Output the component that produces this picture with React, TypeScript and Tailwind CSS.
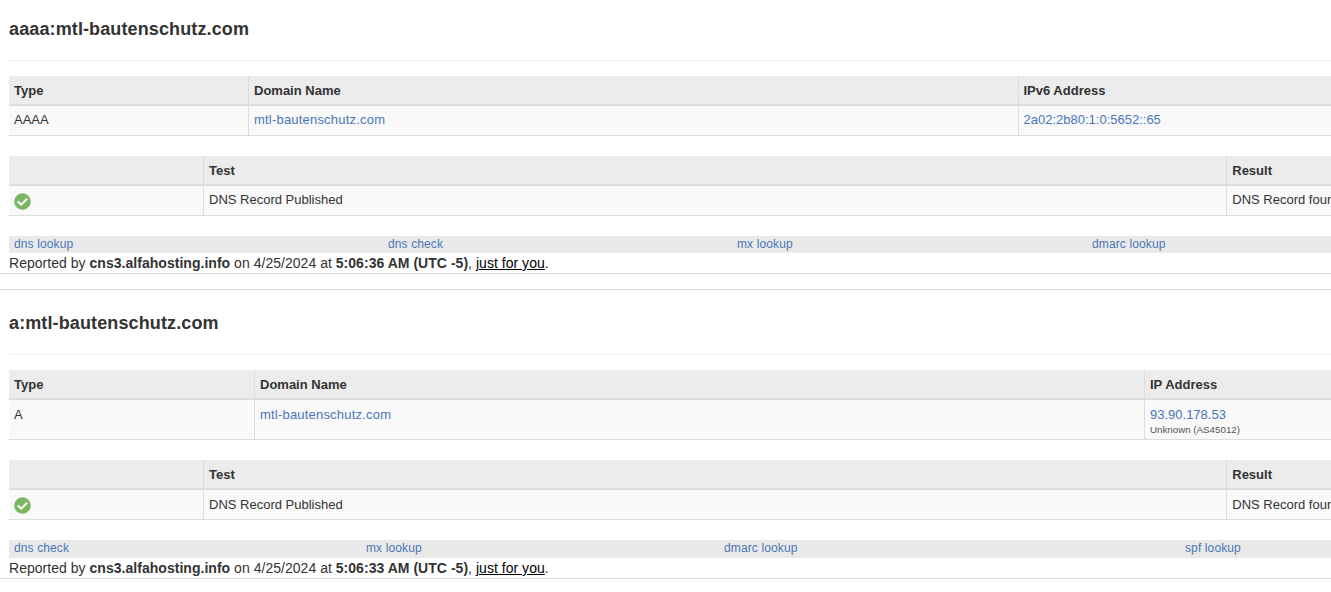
import React from 'react';
import { FaCheckCircle } from 'react-icons/fa';

interface BarProps {
  links: string[];
  cols: string;
  height: string;
}

const Link = ({ children, wide }: { children: React.ReactNode; wide?: boolean }) => (
  <a href="#" className={`text-[#4a76b8] ${wide ? 'tracking-[0.2px]' : ''}`}>{children}</a>
);

const Th = ({ children, last }: { children?: React.ReactNode; last?: boolean }) => (
  <div className={`h-[30px] px-[5px] pt-[6px] bg-[#ececec] border-b-2 border-[#ddd] font-bold whitespace-nowrap ${last ? '' : 'border-r border-r-[#ddd]'}`}>
    {children}
  </div>
);

const Td = ({ children, last, h, pt }: { children?: React.ReactNode; last?: boolean; h: string; pt: string }) => (
  <div className={`${h} ${pt} px-[5px] bg-[#f9f9f9] border-b border-[#ddd] whitespace-nowrap overflow-hidden ${last ? '' : 'border-r border-r-[#ddd]'}`}>
    {children}
  </div>
);

const TestTable = ({ pt, iconTop }: { pt: string; iconTop: string }) => (
  <div className="grid grid-cols-[195px_1023.25px_1fr] mb-5">
    <Th />
    <Th>Test</Th>
    <Th last>Result</Th>
    <Td h="h-[30px]" pt={pt}><FaCheckCircle className={`${iconTop} text-[17px] text-[#77b75f]`} /></Td>
    <Td h="h-[30px]" pt={pt}>DNS Record Published</Td>
    <Td h="h-[30px]" pt={pt} last>DNS Record found</Td>
  </div>
);

const LinkBar = ({ links, cols, height }: BarProps) => (
  <div className={`grid ${cols} ${height} bg-[#e9e9e9] text-xs leading-[16px] px-[5px] tracking-[0.12px]`}>
    {links.map((l) => (
      <div key={l}><Link>{l}</Link></div>
    ))}
  </div>
);

const Reported = ({ time }: { time: string }) => (
  <div className="h-5 text-sm leading-[21px] tracking-[0.03px]">
    Reported by <b>cns3.alfahosting.info</b> on 4/25/2024 at <b>{time} AM (UTC -5)</b>, <a href="#" className="underline text-black">just for you</a>.
  </div>
);

const App = () => {
  return (
    <div className="w-[1331px] h-[592px] overflow-hidden bg-white text-[#333] text-[13px] leading-[18.5px] font-['Liberation_Sans',Arial,sans-serif]">
      <div className="border-b border-[#ddd] mb-[15px]">
        <div className="pl-[9px]">
          <h2 className="pt-[19px] h-[39px] mb-[21px] text-lg leading-5 font-bold tracking-[0.12px]">aaaa:mtl-bautenschutz.com</h2>
          <hr className="border-[#eee] mb-[15px]" />
          <div className="grid grid-cols-[240px_769.5px_1fr] mb-5">
            <Th>Type</Th>
            <Th>Domain Name</Th>
            <Th last>IPv6 Address</Th>
            <Td h="h-[30px]" pt="pt-[5px]">AAAA</Td>
            <Td h="h-[30px]" pt="pt-[5px]"><Link wide>mtl-bautenschutz.com</Link></Td>
            <Td h="h-[30px]" pt="pt-[5px]" last><Link>2a02:2b80:1:0:5652::65</Link></Td>
          </div>
          <TestTable pt="pt-[5px]" iconTop="mt-[2px]" />
          <LinkBar links={['dns lookup', 'dns check', 'mx lookup', 'dmarc lookup']} cols="grid-cols-[374px_349px_355px_1fr]" height="h-[17px]" />
          <Reported time="5:06:36" />
        </div>
      </div>
      <div className="border-t border-b border-[#ddd]">
        <div className="pl-[9px]">
          <h2 className="pt-[23px] h-[43px] mb-[21px] text-lg leading-5 font-bold tracking-[0.12px]">a:mtl-bautenschutz.com</h2>
          <hr className="border-[#eee] mb-[15px]" />
          <div className="grid grid-cols-[246px_890px_1fr] mb-5">
            <Th>Type</Th>
            <Th>Domain Name</Th>
            <Th last>IP Address</Th>
            <Td h="h-[40px]" pt="pt-[6px]">A</Td>
            <Td h="h-[40px]" pt="pt-[6px]"><Link wide>mtl-bautenschutz.com</Link></Td>
            <Td h="h-[40px]" pt="pt-[6px]" last>
              <Link>93.90.178.53</Link>
              <div className="text-[9.75px] leading-[10px] text-[#555]">Unknown (AS45012)</div>
            </Td>
          </div>
          <TestTable pt="pt-[6px]" iconTop="mt-[1px]" />
          <LinkBar links={['dns check', 'mx lookup', 'dmarc lookup', 'spf lookup']} cols="grid-cols-[352px_358px_461px_1fr]" height="h-[18px]" />
          <Reported time="5:06:33" />
        </div>
      </div>
    </div>
  );
};

export default App;
